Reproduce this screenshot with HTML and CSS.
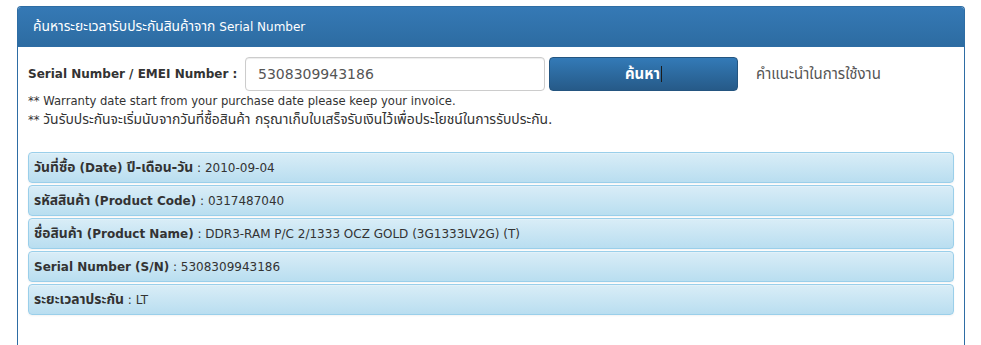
FILE: index.html
```html
<!DOCTYPE html>
<html lang="th">
<head>
<meta charset="utf-8">
<title>Serial Number</title>
<link rel="stylesheet" href="styles.css">
</head>
<body>
<div class="panel">
  <div class="panel-heading"><span class="th">ค้นหาระยะเวลารับประกันสินค้าจาก</span> Serial Number</div>
  <div class="panel-body">
    <div class="search-row">
      <label class="search-label">Serial Number / EMEI Number :</label>
      <input class="search-input" type="text" value="5308309943186">
      <button class="search-btn"><span class="th">ค้นหา</span><span class="caret-mark"></span></button>
      <span class="help-link th">คำแนะนำในการใช้งาน</span>
    </div>
    <p class="hint">** Warranty date start from your purchase date please keep your invoice.</p>
    <p class="hint">** <span class="th th-hint">วันรับประกันจะเริ่มนับจากวันที่ซื้อสินค้า กรุณาเก็บใบเสร็จรับเงินไว้เพื่อประโยชน์ในการรับประกัน.</span></p>
    <div class="results">
      <div class="result-row"><b><span class="th">วันที่ซื้อ</span> (Date) <span class="th">ปี-เดือน-วัน</span></b> : 2010-09-04</div>
      <div class="result-row"><b><span class="th">รหัสสินค้า</span> (Product Code)</b> : 0317487040</div>
      <div class="result-row"><b><span class="th">ชื่อสินค้า</span> (Product Name)</b> : DDR3-RAM P/C 2/1333 OCZ GOLD (3G1333LV2G) (T)</div>
      <div class="result-row"><b>Serial Number (S/N)</b> : 5308309943186</div>
      <div class="result-row"><b><span class="th">ระยะเวลาประกัน</span></b> : LT</div>
    </div>
  </div>
</div>
</body>
</html>
```
FILE: styles.css
```css
html, body {
  margin: 0;
  padding: 0;
  background: #ffffff;
}
body {
  font-family: "DejaVu Sans", "Noto Sans Thai", "Noto Sans", sans-serif;
  font-size: 12px;
  color: #333333;
}
.th {
  font-size: 1.15em;
  line-height: 1;
}
.th-hint {
  font-size: 1.2em;
}
.panel {
  margin: 6px 16px 0 17px;
  border: 1px solid #2e6da4;
  border-bottom: none;
  border-radius: 4px 4px 0 0;
  background: #fff;
  height: 345px;
  box-sizing: border-box;
}
.panel-heading {
  height: 39px;
  display: flex;
  align-items: center;
  gap: 4px;
  padding-left: 15px;
  color: #ffffff;
  font-size: 12px;
  background: linear-gradient(to bottom, #3579b5 0%, #2d6ca2 100%);
  border-bottom: 1px solid #2e6da4;
  border-radius: 3px 3px 0 0;
}
.panel-body {
  padding: 10px 10px 0 10px;
}
.search-row {
  display: flex;
  align-items: center;
  height: 34px;
}
.search-label {
  font-weight: bold;
  font-size: 12px;
  color: #333;
  width: 217px;
  white-space: nowrap;
}
.search-input {
  width: 300px;
  height: 34px;
  box-sizing: border-box;
  border: 1px solid #cccccc;
  border-radius: 4px;
  padding: 0 12px;
  font-family: inherit;
  font-size: 14px;
  color: #555555;
  box-shadow: inset 0 1px 1px rgba(0,0,0,0.075);
}
.search-btn {
  margin-left: 4px;
  width: 189px;
  height: 34px;
  border: 1px solid #245580;
  border-radius: 4px;
  background: linear-gradient(to bottom, #337ab7 0%, #265a88 100%);
  color: #ffffff;
  font-family: inherit;
  font-size: 13px;
  font-weight: bold;
  display: flex;
  align-items: center;
  justify-content: center;
  padding: 0;
}
.caret-mark {
  display: inline-block;
  width: 1px;
  height: 16px;
  background: #1b1b1b;
  margin-left: 1px;
}
.help-link {
  margin-left: 18px;
  font-size: 15px;
  color: #555555;
}
.hint {
  margin: 0;
  font-size: 11.6px;
  line-height: 19px;
  color: #333;
}
.hint:first-of-type {
  margin-top: 1px;
}
.results {
  margin-top: 22px;
  display: flex;
  flex-direction: column;
  gap: 2px;
}
.result-row {
  height: 31px;
  box-sizing: border-box;
  display: flex;
  align-items: center;
  padding-left: 5px;
  border: 1px solid #9acfea;
  border-radius: 4px;
  background: linear-gradient(to bottom, #d9edf7 0%, #b9def0 100%);
  box-shadow: inset 0 1px 0 rgba(255,255,255,0.25), 0 1px 2px rgba(0,0,0,0.05);
  font-size: 12px;
  color: #333;
  white-space: pre;
}
.result-row b {
  font-size: 12px;
}
```
